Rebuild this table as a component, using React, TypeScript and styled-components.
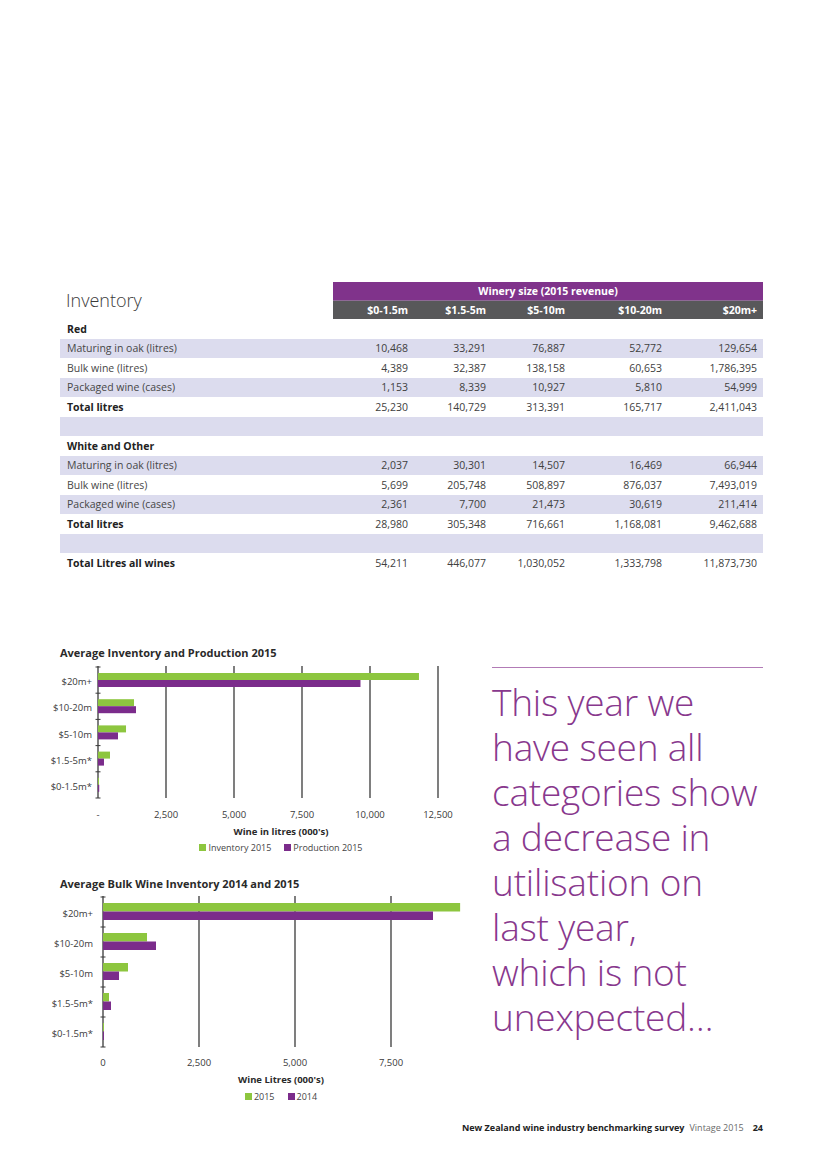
import React from "react";
import styled, { createGlobalStyle } from "styled-components";

const GREEN = "#8dc63f";
const PURPLE = "#7b2c8b";
const COLS = "273px 81px 78px 79px 97px 95px";
const SVG_SHIFT = 14;

const GlobalStyle = createGlobalStyle`
  html, body { margin: 0; padding: 0; background: #ffffff; }
  body { font-family: "Open Sans", "Liberation Sans", sans-serif; color: #333; }
`;

const Page = styled.div`
  width: 820px;
  height: 1162px;
  box-sizing: border-box;
  padding: 282px 57px 27px 60px;
  display: flex;
  flex-direction: column;
`;

const Table = styled.div`
  display: flex;
  flex-direction: column;
  width: 703px;
`;

const HeadGrid = styled.div`
  display: grid;
  grid-template-columns: ${COLS};
  grid-template-rows: 18px 19px;
`;

const TableTitle = styled.div`
  grid-row: 1 / span 2;
  grid-column: 1;
  align-self: end;
  padding: 0 0 8px 6px;
  font-size: 18px;
  font-weight: 300;
  line-height: 22px;
  color: #3b3b3b;
`;

const GroupHead = styled.div`
  grid-row: 1;
  grid-column: 2 / span 5;
  background: #80338b;
  color: #fff;
  font-weight: 700;
  font-size: 10.5px;
  line-height: 18px;
  text-align: center;
`;

const ColHead = styled.div`
  grid-row: 2;
  background: #58585a;
  border-top: 1px solid #8f6a96;
  box-sizing: border-box;
  color: #fff;
  font-weight: 700;
  font-size: 10.5px;
  line-height: 18px;
  text-align: right;
  padding-right: 6px;
`;

const Row = styled.div<{ $shade?: boolean }>`
  display: grid;
  grid-template-columns: ${COLS};
  height: 19.5px;
  align-items: center;
  background: ${(p) => (p.$shade ? "#dcdcee" : "transparent")};
  font-size: 10.5px;
  line-height: 14px;
  color: #404040;
`;

const RowLabel = styled.div<{ $bold?: boolean }>`
  padding-left: 7px;
  font-weight: ${(p) => (p.$bold ? 700 : 400)};
  color: ${(p) => (p.$bold ? "#222" : "#474747")};
`;

const Num = styled.div`
  text-align: right;
  padding-right: 6px;
`;

const Lower = styled.div`
  display: flex;
  margin-top: 72px;
`;

const ChartsCol = styled.div`
  width: 432px;
  display: flex;
  flex-direction: column;
`;

const ChartBlock = styled.section<{ $mt: number }>`
  display: flex;
  flex-direction: column;
  margin-top: ${(p) => p.$mt}px;
`;

const ChartTitle = styled.h3`
  margin: 0;
  font-size: 11px;
  font-weight: 700;
  line-height: 16px;
  color: #2a2a2a;
`;

const Svg = styled.svg`
  display: block;
  margin-left: -${SVG_SHIFT}px;
  font-family: "Open Sans", "Liberation Sans", sans-serif;
  font-size: 9.5px;
  fill: #3a3a3a;
`;

const AxisTitle = styled.div<{ $mt: number }>`
  width: 442px;
  margin-top: ${(p) => p.$mt}px;
  text-align: center;
  font-size: 9.5px;
  font-weight: 700;
  line-height: 14px;
  color: #2a2a2a;
`;

const Legend = styled.div<{ $mt: number }>`
  width: 442px;
  margin-top: ${(p) => p.$mt}px;
  display: flex;
  justify-content: center;
  gap: 13px;
  font-size: 9px;
  line-height: 12px;
  color: #444;
`;

const LegendItem = styled.span`
  display: flex;
  align-items: center;
  gap: 2px;
`;

const Swatch = styled.span<{ $color: string }>`
  width: 7px;
  height: 7px;
  background: ${(p) => p.$color};
`;

const QuoteCol = styled.aside`
  width: 271px;
  padding-top: 22px;
`;

const QuoteRule = styled.div`
  height: 1px;
  background: #b27bb6;
`;

const Quote = styled.p`
  margin: 11px 0 0;
  font-size: 37px;
  font-weight: 300;
  line-height: 45px;
  color: #88388d;
  letter-spacing: -0.2px;
`;

const Footer = styled.footer`
  margin-top: auto;
  display: flex;
  justify-content: flex-end;
  align-items: baseline;
  gap: 5px;
  font-size: 9px;
  line-height: 14px;
  color: #222;
`;

const FootStrong = styled.span`
  font-weight: 700;
`;

const FootLight = styled.span`
  color: #6a6a6a;
  margin-right: 4px;
`;

type Datum = { label: string; a: number; b: number };

interface ChartSpec {
  width: number;
  height: number;
  axisX: number;
  pxPerUnit: number;
  top: number;
  band: number;
  barOffset: number;
  barH: number;
  catLabelX: number;
  tickLabelY: number;
  grid: { v: number; label: string }[];
  data: Datum[];
}

const BarChart: React.FC<{ spec: ChartSpec }> = ({ spec }) => {
  const n = spec.data.length;
  const bottom = spec.top + spec.band * n;
  const ax = spec.axisX + SVG_SHIFT;
  const w = spec.width + SVG_SHIFT;
  return (
    <Svg width={w} height={spec.height} viewBox={`0 0 ${w} ${spec.height}`}>
      {spec.grid.map((g) => {
        const x = ax + g.v * spec.pxPerUnit;
        return (
          <g key={g.label}>
            <line x1={x} x2={x} y1={spec.top - 1} y2={bottom} stroke="#3a3a3a" strokeWidth={1.3} />
            <text x={x} y={spec.tickLabelY} textAnchor="middle">
              {g.label}
            </text>
          </g>
        );
      })}
      {Array.from({ length: n + 1 }).map((_, i) => (
        <line
          key={i}
          x1={ax - 2.5}
          x2={ax + 2.5}
          y1={spec.top + i * spec.band}
          y2={spec.top + i * spec.band}
          stroke="#3a3a3a"
          strokeWidth={1}
        />
      ))}
      {spec.data.map((d, i) => {
        const bt = spec.top + i * spec.band + spec.barOffset;
        const mid = spec.top + i * spec.band + spec.band / 2;
        return (
          <g key={d.label}>
            <rect x={ax} y={bt} width={Math.max(1, d.a * spec.pxPerUnit)} height={spec.barH} fill={GREEN} />
            <rect
              x={ax}
              y={bt + spec.barH}
              width={Math.max(1, d.b * spec.pxPerUnit)}
              height={spec.barH}
              fill={PURPLE}
            />
            <text x={spec.catLabelX + SVG_SHIFT} y={mid + 5} textAnchor="end">
              {d.label}
            </text>
          </g>
        );
      })}
    </Svg>
  );
};

const chart1: ChartSpec = {
  width: 420,
  height: 162,
  axisX: 38,
  pxPerUnit: 68 / 2500,
  top: 6,
  band: 26.2,
  barOffset: 6,
  barH: 7,
  catLabelX: 32,
  tickLabelY: 157,
  grid: [
    { v: 0, label: "-" },
    { v: 2500, label: "2,500" },
    { v: 5000, label: "5,000" },
    { v: 7500, label: "7,500" },
    { v: 10000, label: "10,000" },
    { v: 12500, label: "12,500" },
  ],
  data: [
    { label: "$20m+", a: 11800, b: 9650 },
    { label: "$10-20m", a: 1324, b: 1397 },
    { label: "$5-10m", a: 1030, b: 735 },
    { label: "$1.5-5m*", a: 441, b: 220 },
    { label: "$0-1.5m*", a: 30, b: 45 },
  ],
};

const chart2: ChartSpec = {
  width: 420,
  height: 180,
  axisX: 43,
  pxPerUnit: 96 / 2500,
  top: 5,
  band: 30,
  barOffset: 6,
  barH: 8.5,
  catLabelX: 33,
  tickLabelY: 174,
  grid: [
    { v: 0, label: "0" },
    { v: 2500, label: "2,500" },
    { v: 5000, label: "5,000" },
    { v: 7500, label: "7,500" },
  ],
  data: [
    { label: "$20m+", a: 9300, b: 8594 },
    { label: "$10-20m", a: 1146, b: 1380 },
    { label: "$5-10m", a: 651, b: 417 },
    { label: "$1.5-5m*", a: 156, b: 208 },
    { label: "$0-1.5m*", a: 20, b: 25 },
  ],
};

type TRow = { label: string; bold?: boolean; shade?: boolean; values?: string[] };

const rows: TRow[] = [
  { label: "Red", bold: true },
  { label: "Maturing in oak (litres)", shade: true, values: ["10,468", "33,291", "76,887", "52,772", "129,654"] },
  { label: "Bulk wine (litres)", values: ["4,389", "32,387", "138,158", "60,653", "1,786,395"] },
  { label: "Packaged wine (cases)", shade: true, values: ["1,153", "8,339", "10,927", "5,810", "54,999"] },
  { label: "Total litres", bold: true, values: ["25,230", "140,729", "313,391", "165,717", "2,411,043"] },
  { label: "", shade: true },
  { label: "White and Other", bold: true },
  { label: "Maturing in oak (litres)", shade: true, values: ["2,037", "30,301", "14,507", "16,469", "66,944"] },
  { label: "Bulk wine (litres)", values: ["5,699", "205,748", "508,897", "876,037", "7,493,019"] },
  { label: "Packaged wine (cases)", shade: true, values: ["2,361", "7,700", "21,473", "30,619", "211,414"] },
  { label: "Total litres", bold: true, values: ["28,980", "305,348", "716,661", "1,168,081", "9,462,688"] },
  { label: "", shade: true },
  { label: "Total Litres all wines", bold: true, values: ["54,211", "446,077", "1,030,052", "1,333,798", "11,873,730"] },
];

const heads = ["$0-1.5m", "$1.5-5m", "$5-10m", "$10-20m", "$20m+"];

export default function App() {
  return (
    <>
      <GlobalStyle />
      <Page>
        <Table>
          <HeadGrid>
            <TableTitle>Inventory</TableTitle>
            <GroupHead>Winery size (2015 revenue)</GroupHead>
            {heads.map((h) => (
              <ColHead key={h}>{h}</ColHead>
            ))}
          </HeadGrid>
          {rows.map((r, i) => (
            <Row key={i} $shade={r.shade}>
              <RowLabel $bold={r.bold}>{r.label}</RowLabel>
              {(r.values ?? ["", "", "", "", ""]).map((v, j) => (
                <Num key={j}>{v}</Num>
              ))}
            </Row>
          ))}
        </Table>

        <Lower>
          <ChartsCol>
            <ChartBlock $mt={0}>
              <ChartTitle>Average Inventory and Production 2015</ChartTitle>
              <BarChart spec={chart1} />
              <AxisTitle $mt={2}>Wine in litres (000's)</AxisTitle>
              <Legend $mt={3}>
                <LegendItem>
                  <Swatch $color={GREEN} />
                  Inventory 2015
                </LegendItem>
                <LegendItem>
                  <Swatch $color={PURPLE} />
                  Production 2015
                </LegendItem>
              </Legend>
            </ChartBlock>
            <ChartBlock $mt={22}>
              <ChartTitle>Average Bulk Wine Inventory 2014 and 2015</ChartTitle>
              <BarChart spec={chart2} />
              <AxisTitle $mt={1}>Wine Litres (000's)</AxisTitle>
              <Legend $mt={4}>
                <LegendItem>
                  <Swatch $color={GREEN} />
                  2015
                </LegendItem>
                <LegendItem>
                  <Swatch $color={PURPLE} />
                  2014
                </LegendItem>
              </Legend>
            </ChartBlock>
          </ChartsCol>
          <QuoteCol>
            <QuoteRule />
            <Quote>
              This year we
              <br />
              have seen all
              <br />
              categories show
              <br />
              a decrease in
              <br />
              utilisation on
              <br />
              last year,
              <br />
              which is not
              <br />
              unexpected…
            </Quote>
          </QuoteCol>
        </Lower>

        <Footer>
          <FootStrong>New Zealand wine industry benchmarking survey</FootStrong>
          <FootLight>Vintage 2015</FootLight>
          <FootStrong>24</FootStrong>
        </Footer>
      </Page>
    </>
  );
}
